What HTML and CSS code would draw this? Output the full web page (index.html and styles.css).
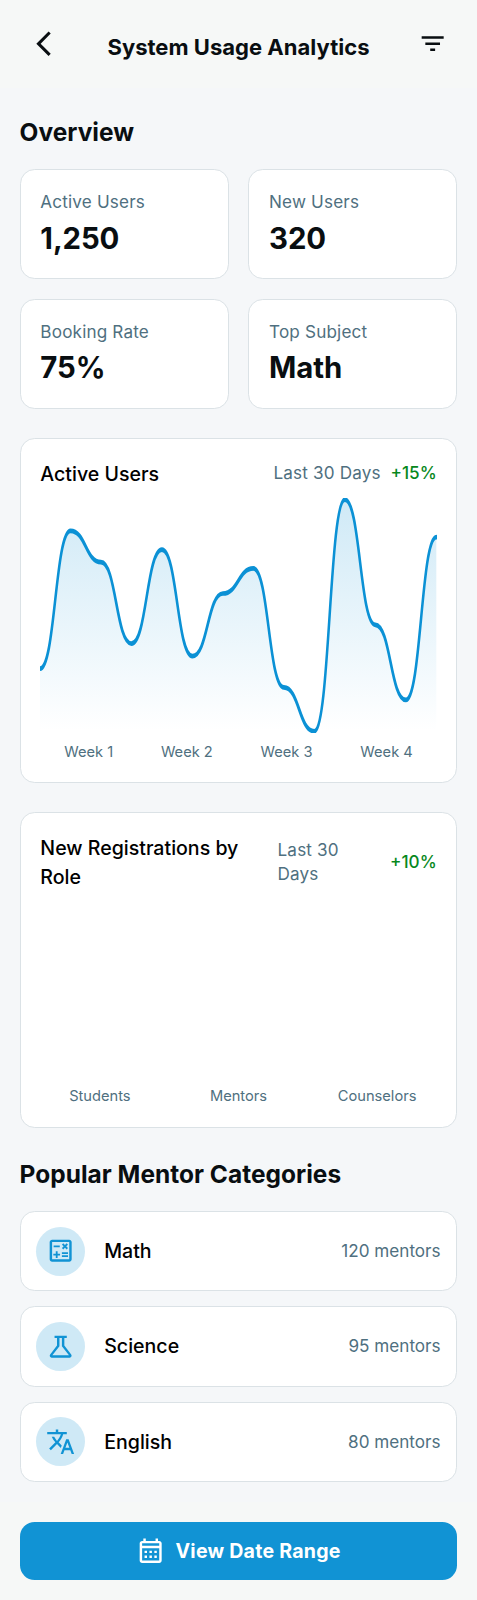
FILE: index.html
```html
<!DOCTYPE html>
<html lang="en">
<head>
<meta charset="utf-8">
<title>System Usage Analytics</title>
<link rel="stylesheet" href="styles.css">
</head>
<body>
<header class="topbar">
  <button class="icon-btn" aria-label="Back"><svg class="icon" viewBox="0 0 24 24"><path d="M16 22 6 12 16 2l1.775 1.775L9.55 12l8.225 8.225Z"/></svg></button>
  <h1 class="title">System Usage Analytics</h1>
  <button class="icon-btn" aria-label="Filter"><svg class="icon" viewBox="0 0 24 24"><path d="M10 18h4v-2h-4zM3 6v2h18V6zm3 7h12v-2H6z"/></svg></button>
</header>
<main class="main">
  <section class="section">
    <h2 class="heading">Overview</h2>
    <div class="stats">
      <div class="card"><p class="label">Active Users</p><p class="value">1,250</p></div>
      <div class="card"><p class="label">New Users</p><p class="value">320</p></div>
      <div class="card"><p class="label">Booking Rate</p><p class="value">75%</p></div>
      <div class="card"><p class="label">Top Subject</p><p class="value">Math</p></div>
    </div>
  </section>
  <section class="card chart-card">
    <div class="card-head">
      <h3 class="card-title">Active Users</h3>
      <div class="period"><p class="label">Last 30 Days</p><p class="delta">+15%</p></div>
    </div>
    <svg class="chart" viewBox="0 0 472 150" preserveAspectRatio="none">
      <defs><linearGradient id="area" x1="0" y1="1" x2="0" y2="149" gradientUnits="userSpaceOnUse"><stop class="stop-top" offset="0"/><stop class="stop-end" offset="1"/></linearGradient></defs>
      <path fill="url(#area)" d="M0 109C18.15 109 18.15 21 36.31 21C54.46 21 54.46 41 72.62 41C90.77 41 90.77 93 108.92 93C127.08 93 127.08 33 145.23 33C163.38 33 163.38 101 181.54 101C199.69 101 199.69 61 217.85 61C236 61 236 45 254.15 45C272.31 45 272.31 121 290.46 121C308.62 121 308.62 149 326.77 149C344.92 149 344.92 1 363.08 1C381.23 1 381.23 81 399.38 81C417.54 81 417.54 129 435.69 129C453.85 129 453.85 25 472 25V149H0Z"/>
      <path class="line" d="M0 109C18.15 109 18.15 21 36.31 21C54.46 21 54.46 41 72.62 41C90.77 41 90.77 93 108.92 93C127.08 93 127.08 33 145.23 33C163.38 33 163.38 101 181.54 101C199.69 101 199.69 61 217.85 61C236 61 236 45 254.15 45C272.31 45 272.31 121 290.46 121C308.62 121 308.62 149 326.77 149C344.92 149 344.92 1 363.08 1C381.23 1 381.23 81 399.38 81C417.54 81 417.54 129 435.69 129C453.85 129 453.85 25 472 25"/>
    </svg>
    <div class="weeks"><span>Week 1</span><span>Week 2</span><span>Week 3</span><span>Week 4</span></div>
  </section>
  <section class="card chart-card">
    <div class="card-head">
      <h3 class="card-title">New Registrations by Role</h3>
      <div class="period"><p class="label">Last 30 Days</p><p class="delta">+10%</p></div>
    </div>
    <div class="roles"><span>Students</span><span>Mentors</span><span>Counselors</span></div>
  </section>
  <section class="section">
    <h2 class="heading">Popular Mentor Categories</h2>
    <ul class="list">
      <li class="row"><span class="badge"><svg class="icon" viewBox="0 0 24 24"><path d="M19 3H5c-1.1 0-2 .9-2 2v14c0 1.1.9 2 2 2h14c1.1 0 2-.9 2-2V5c0-1.1-.9-2-2-2zm0 16H5V5h14v14zM6.25 7.72h5v1.5h-5zM13 15.75h5v1.5h-5zM13 13.25h5v1.5h-5zM8 18h1.5v-2h2v-1.5h-2v-2H8v2H6V16h2zM14.09 10.95l1.41-1.41 1.41 1.41 1.06-1.06-1.41-1.42 1.41-1.41L16.91 6 15.5 7.41 14.09 6l-1.06 1.06 1.41 1.41-1.41 1.42z"/></svg></span><span class="name">Math</span><span class="label count">120 mentors</span></li>
      <li class="row"><span class="badge"><svg class="icon" viewBox="0 0 24 24"><path d="M4.6 21q-1 0-1.4-.9t.2-1.65L9 11V5H7V3h10v2h-2v6l5.6 7.45q.6.75.2 1.65t-1.4.9zm.6-2h13.6L13 11.7V5h-2v6.7z"/></svg></span><span class="name">Science</span><span class="label count">95 mentors</span></li>
      <li class="row"><span class="badge"><svg class="icon" viewBox="0 0 24 24"><path d="M12.87 15.07l-2.54-2.51.03-.03c1.74-1.94 2.98-4.17 3.71-6.53H17V4h-7V2H8v2H1v1.99h11.17C11.5 7.92 10.44 9.75 9 11.35 8.07 10.32 7.3 9.19 6.69 8h-2c.73 1.63 1.73 3.17 2.98 4.56l-5.09 5.02L4 19l5-5 3.11 3.11.76-2.04zM18.5 10h-2L12 22h2l1.12-3h4.75L21 22h2l-4.5-12zm-2.62 7l1.62-4.33L19.12 17h-3.24z"/></svg></span><span class="name">English</span><span class="label count">80 mentors</span></li>
    </ul>
  </section>
</main>
<footer class="footer">
  <button class="cta"><svg class="icon" viewBox="0 0 24 24"><path d="M19 4h-1V2h-2v2H8V2H6v2H5c-1.11 0-1.99.9-1.99 2L3 20c0 1.1.89 2 2 2h14c1.1 0 2-.9 2-2V6c0-1.1-.9-2-2-2zm0 16H5V10h14v10zm0-12H5V6h14v2zM9 14H7v-2h2v2zm4 0h-2v-2h2v2zm4 0h-2v-2h2v2zm-8 4H7v-2h2v2zm4 0h-2v-2h2v2zm4 0h-2v-2h2v2z"/></svg><span>View Date Range</span></button>
</footer>
</body>
</html>
```
FILE: styles.css
```css
:root {
  --primary: #1193d4;
  --ink: #090e11;
  --muted: #4f7080;
  --border: #dbe2e6;
  font-size: 19.57px;
}
* { box-sizing: border-box; margin: 0; padding: 0; }
body {
  display: flex;
  flex-direction: column;
  height: 1600px;
  background: #f5f7f9;
  color: var(--ink);
  font-family: Inter, "Liberation Sans", sans-serif;
}
button { border: 0; background: none; color: inherit; font: inherit; }
.icon { display: block; width: 1.5rem; height: 1.5rem; fill: currentColor; }
.topbar {
  display: flex;
  align-items: flex-start;
  justify-content: space-between;
  height: 88px;
  padding: 1rem;
  background: #f6f8f7;
}
.icon-btn { padding: .5rem; }
.title { padding-top: 10px; font-size: 1.125rem; line-height: 34px; font-weight: 650; letter-spacing: .001em; }
.main { display: flex; flex: 1; flex-direction: column; gap: 1.5rem; padding: 27.5px 1rem 0; }
.heading { margin-bottom: 1rem; font-size: 1.25rem; line-height: 1.75rem; font-weight: 650; letter-spacing: .001em; }
.section:first-child .heading { margin: -1px 0 calc(1rem + 1px); }
.stats { display: grid; grid-template-columns: 1fr 1fr; gap: 1rem; }
.card { padding: calc(1rem + .22px) calc(1rem + .22px) calc(1rem + .1px); border: 1px solid var(--border); border-radius: .75rem; background: #fff; }
.label { color: var(--muted); font-size: .875rem; line-height: 1.25rem; letter-spacing: .01em; }
.count { letter-spacing: 0; }
.value { padding-top: 4px; font-size: 1.5rem; line-height: calc(2.25rem - 4px); font-weight: 700; letter-spacing: -.004em; }
.chart-card { display: flex; flex-direction: column; gap: .5rem; }
.card-head { display: flex; align-items: center; justify-content: space-between; }
.card-title { padding-top: 1px; margin-bottom: -1px; color: #000; font-size: 1rem; line-height: 1.5rem; font-weight: 540; }
.period { display: flex; align-items: center; gap: .5rem; }
.delta { color: #07881d; font-size: .875rem; line-height: 1.25rem; font-weight: 540; }
.chart { display: block; width: 100%; height: 12rem; }
.stop-top { stop-color: var(--primary); stop-opacity: .2; }
.stop-end { stop-color: var(--primary); stop-opacity: 0; }
.line { fill: none; stroke: #0b91d5; stroke-width: 3; stroke-linecap: round; }
.weeks { display: flex; justify-content: space-around; }
.weeks, .roles { color: var(--muted); font-size: .75rem; line-height: 1rem; }
.roles { display: grid; grid-template-columns: repeat(3, 1fr); gap: 1rem; height: 205.5px; align-items: end; text-align: center; }
.list { display: flex; flex-direction: column; gap: .75rem; list-style: none; }
.row { display: flex; align-items: center; gap: 1rem; height: 80.7px; padding: 0 15.9px 0 15.2px; border: 1px solid var(--border); border-radius: .75rem; background: #fff; }
.badge { display: grid; place-items: center; width: 2.5rem; height: 2.5rem; border-radius: 50%; background: #cfe9f6; color: var(--primary); }
.name { flex: 1; padding-top: 1px; color: #000; font-size: 1rem; line-height: 1.5rem; font-weight: 540; }
.footer { padding: 1rem; background: #f6f8f7; }
.cta { display: flex; align-items: center; justify-content: center; gap: .5rem; width: 100%; height: 3rem; border-radius: .75rem; background: var(--primary); color: #fff; font-weight: 700; letter-spacing: .012em; }
```
